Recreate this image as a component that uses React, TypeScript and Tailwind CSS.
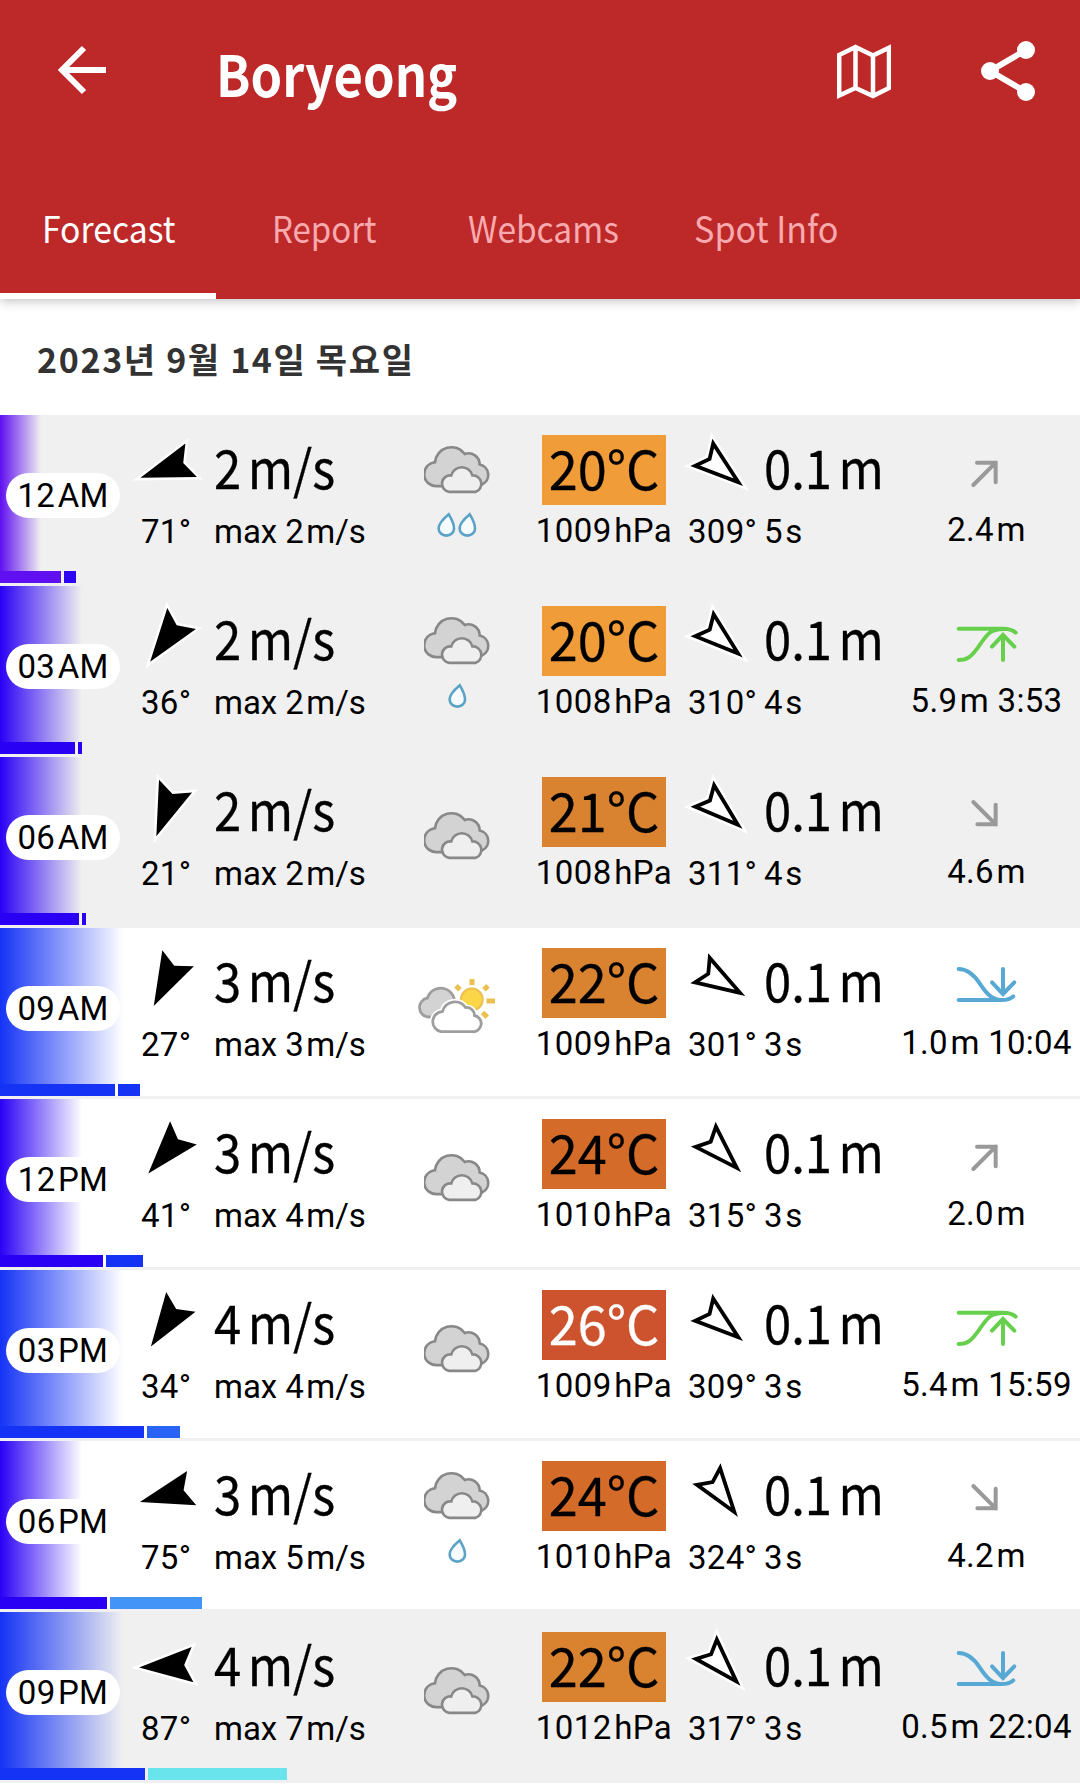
type Tide = "rising" | "falling" | "high" | "low"

interface ForecastRow {
  time: string
  half: "AM" | "PM"
  night: boolean
  windDeg: number
  wind: number
  gust: number
  sky: "cloudy" | "partly"
  drops: number
  temp: number
  tempClass: string
  pressure: number
  waveDeg: number
  period: number
  tide: Tide
  level: string
  tideTime?: string
  gradientClass: string
  barClass: string
  gustBarClass: string
}

const rows: ForecastRow[] = [
  { time: "12", half: "AM", night: true, windDeg: 71, wind: 2, gust: 2, sky: "cloudy", drops: 2, temp: 20, tempClass: "bg-[#f09c38]", pressure: 1009, waveDeg: 309, period: 5, tide: "rising", level: "2.4", gradientClass: "w-[41px] from-[#5f0ff0]", barClass: "w-[61px] bg-[#5f0ff0]", gustBarClass: "w-[12px] bg-[#2d05f2]" },
  { time: "03", half: "AM", night: true, windDeg: 36, wind: 2, gust: 2, sky: "cloudy", drops: 1, temp: 20, tempClass: "bg-[#f09c38]", pressure: 1008, waveDeg: 310, period: 4, tide: "high", level: "5.9", tideTime: "3:53", gradientClass: "w-[82px] from-[#2a00f5]", barClass: "w-[75px] bg-[#2a00f5]", gustBarClass: "w-[4px] bg-[#2a00f5]" },
  { time: "06", half: "AM", night: true, windDeg: 21, wind: 2, gust: 2, sky: "cloudy", drops: 0, temp: 21, tempClass: "bg-[#d9822f]", pressure: 1008, waveDeg: 311, period: 4, tide: "falling", level: "4.6", gradientClass: "w-[82px] from-[#2a00f5]", barClass: "w-[79px] bg-[#2a00f5]", gustBarClass: "w-[4px] bg-[#2a00f5]" },
  { time: "09", half: "AM", night: false, windDeg: 27, wind: 3, gust: 3, sky: "partly", drops: 0, temp: 22, tempClass: "bg-[#d9822f]", pressure: 1009, waveDeg: 301, period: 3, tide: "low", level: "1.0", tideTime: "10:04", gradientClass: "w-[123px] from-[#1433f5]", barClass: "w-[115px] bg-[#1433f5]", gustBarClass: "w-[22px] bg-[#1433f5]" },
  { time: "12", half: "PM", night: false, windDeg: 41, wind: 3, gust: 4, sky: "cloudy", drops: 0, temp: 24, tempClass: "bg-[#d46b29]", pressure: 1010, waveDeg: 315, period: 3, tide: "rising", level: "2.0", gradientClass: "w-[82px] from-[#2a00f5]", barClass: "w-[103px] bg-[#2a00f5]", gustBarClass: "w-[37px] bg-[#1433f5]" },
  { time: "03", half: "PM", night: false, windDeg: 34, wind: 4, gust: 4, sky: "cloudy", drops: 0, temp: 26, tempClass: "bg-[#cc532d] text-white", pressure: 1009, waveDeg: 309, period: 3, tide: "high", level: "5.4", tideTime: "15:59", gradientClass: "w-[123px] from-[#1433f5]", barClass: "w-[144px] bg-[#1433f5]", gustBarClass: "w-[33px] bg-[#2863f5]" },
  { time: "06", half: "PM", night: false, windDeg: 75, wind: 3, gust: 5, sky: "cloudy", drops: 1, temp: 24, tempClass: "bg-[#d46b29]", pressure: 1010, waveDeg: 324, period: 3, tide: "falling", level: "4.2", gradientClass: "w-[82px] from-[#2a00f5]", barClass: "w-[107px] bg-[#2a00f5]", gustBarClass: "w-[92px] bg-[#4294f7]" },
  { time: "09", half: "PM", night: true, windDeg: 87, wind: 4, gust: 7, sky: "cloudy", drops: 0, temp: 22, tempClass: "bg-[#d9822f]", pressure: 1012, waveDeg: 317, period: 3, tide: "low", level: "0.5", tideTime: "22:04", gradientClass: "w-[123px] from-[#1433f5]", barClass: "w-[145px] bg-[#1433f5]", gustBarClass: "w-[139px] bg-[#69e3ec]" },
]

const ARROW = "M0 -27 L17.7 26.6 L0 18.2 L-17.7 26.6 Z"
const ARROW_INNER = "M0 -21 L14.3 22.9 L0 16 L-14.3 22.9 Z"

// Arrows point where the wind or swell is heading, so the bearing is turned by 180
function DirectionArrow({ deg, outline = false }: { deg: number; outline?: boolean }) {
  return (
    <svg viewBox="-32 -32 64 64" className="w-16 h-16 overflow-visible">
      <g transform={`rotate(${deg + 180})`}>
        <path d={ARROW} fill="#fff" stroke="#fff" strokeWidth="5" />
        {outline ? <path d={ARROW_INNER} fill="#fff" stroke="#000" strokeWidth="3.8" /> : <path d={ARROW} />}
      </g>
    </svg>
  )
}

function CloudIcon() {
  return (
    <svg viewBox="130 106 202 148" className="w-[67px] h-[49px]" stroke="#888" strokeWidth="8">
      <path d="M190 230H170A36 36 0 0 1 163 158A50 50 0 0 1 253 133A34 34 0 0 1 298 165A32 32 0 0 1 306 225Z" fill="#d3d3d3" />
      <path d="M206 247.500A24.500 24.500 0 0 1 212 198A33 33 0 0 1 276 198A25.500 25.500 0 0 1 286 247.500Z" fill="#efefef" />
    </svg>
  )
}

function SunCloudIcon() {
  return (
    <svg viewBox="418 978 79 57" className="w-[79px] h-[57px] overflow-visible">
      <circle cx="471.800" cy="999.500" r="10.900" fill="#fad648" stroke="#ecc04f" strokeWidth="2" />
      <path d="M472 979v6M486.500 1001h8.500M484 989.700l4-4M460 989.700l-4-4M482.500 1012.500l4.800 4.600" stroke="#ecc04f" strokeWidth="5" />
      <path d="M436 1017H428A9.600 9.600 0 0 1 427.500 998A13.500 13.500 0 1 1 454 1006Z" fill="#d3d3d3" stroke="#9e9e9e" strokeWidth="2.800" />
      <path d="M441 1031.700A10.200 10.200 0 0 1 442.500 1011.500A12.800 12.800 0 0 1 465.500 1007.500A8 8 0 0 1 474.500 1015.500A8.200 8.200 0 0 1 472 1031.700Z" fill="#fff" stroke="#fff" strokeWidth="6" />
      <path d="M441 1031.700A10.200 10.200 0 0 1 442.500 1011.500A12.800 12.800 0 0 1 465.500 1007.500A8 8 0 0 1 474.500 1015.500A8.200 8.200 0 0 1 472 1031.700Z" fill="#fff" stroke="#9e9e9e" strokeWidth="2.800" />
    </svg>
  )
}

function DropIcon() {
  return (
    <svg viewBox="172 306 58 76" className="w-[19px] h-[25px]">
      <path d="M208 313C190 328 177 343 177 356A23.500 22 0 0 0 224 356C224 342 217 328 208 313Z" fill="#f6fbfd" stroke="#5ba3c6" strokeWidth="8" />
    </svg>
  )
}

const tidePaths: Record<Tide, { d: string; color: string }> = {
  rising: { d: "M59 96L126 29M70 29H126V88", color: "#999999" },
  falling: { d: "M59 21L126 88M126 29V88H71", color: "#999999" },
  high: { d: "M15 14H148C168 14 178 18 186 26M15 108C40 108 53 100 78 63S113 16 148 15M148 108V33M115 68L148 33L182 68", color: "#66d04c" },
  low: { d: "M15 9C40 9 58 22 78 52S113 100 143 102M15 102H143C163 102 173 97 179 91M148 9V84M115 49L148 84L182 49", color: "#57a9d3" },
}

function TideIcon({ tide }: { tide: Tide }) {
  const { d, color } = tidePaths[tide]
  return (
    <svg viewBox="4 0 192 120" className="w-16 h-10 overflow-visible" fill="none" stroke={color} strokeWidth="12" strokeLinecap="round">
      <path d={d} />
    </svg>
  )
}

const bigFont = "font-['Noto_Sans_CJK_KR',sans-serif] text-[53px] [-webkit-text-stroke:0.3px]"
const bigText = `${bigFont} leading-[70px] whitespace-pre`
const smallText = "text-[33px] leading-10 tracking-[0.3px] whitespace-pre"

function BigValue({ value, unit }: { value: string | number; unit: string }) {
  return (
    <span className="inline-block origin-left scale-x-[0.925]">
      {value}
      <span className="ml-[7px]">{unit}</span>
    </span>
  )
}

function Value({ value, unit }: { value: string | number; unit: string }) {
  return (
    <>
      {value}
      <span className="ml-[2.5px]">{unit}</span>
    </>
  )
}

function Row({ row }: { row: ForecastRow }) {
  return (
    <div className={`relative h-[171px] border-b-3 border-[#f0f0f0] ${row.night ? "bg-[#f0f0f0]" : "bg-white"}`}>
      <div className={`absolute left-0 top-0 h-[156px] bg-linear-to-r/srgb to-transparent ${row.gradientClass}`} />
      <div className="relative flex h-[156px]">
        <div className="w-[134px] pl-1.5 pt-[58px]">
          <div className={`w-[114px] h-[45px] rounded-full bg-white text-center ${smallText}`}>
            <span className="block pt-[3px]">
              <Value value={row.time} unit={row.half} />
            </span>
          </div>
        </div>

        <div className="w-[258px] pt-4 grid grid-cols-[80px_1fr] grid-rows-[81px_40px]">
          <div className="pt-1.5">
            <DirectionArrow deg={row.windDeg} />
          </div>
          <div className={bigText}>
            <BigValue value={row.wind} unit="m/s" />
          </div>
          <div className={`pl-[7px] ${smallText}`}>{row.windDeg}°</div>
          <div className="text-[33px] leading-10 tracking-[-0.05px] whitespace-pre">
            max <Value value={row.gust} unit="m/s" />
          </div>
        </div>

        <div className={`w-[130px] flex flex-col items-center justify-center ${row.drops > 0 ? "pb-1 gap-[18px]" : ""}`}>
          {row.sky === "partly" ? <SunCloudIcon /> : <CloudIcon />}
          {row.drops > 0 && (
            <div className="flex gap-0.5">
              {Array.from({ length: row.drops }, (_, i) => (
                <DropIcon key={i} />
              ))}
            </div>
          )}
        </div>

        <div className="w-[164px] pt-5 flex flex-col items-center">
          <div className={`w-[124px] h-[70px] flex justify-center ${row.tempClass}`}>
            <span className={`${bigFont} leading-[65px] scale-x-[0.985]`}>{row.temp}°C</span>
          </div>
          <div className="pt-1.5 text-[33px] leading-10 tracking-[0.4px] whitespace-pre">
            <Value value={row.pressure} unit="hPa" />
          </div>
        </div>

        <div className="w-[208px] pt-4 grid grid-cols-[78px_1fr] grid-rows-[81px_40px]">
          <div className="pl-1 pt-1.5">
            <DirectionArrow deg={row.waveDeg} outline />
          </div>
          <div className={bigText}>
            <BigValue value="0.1" unit="m" />
          </div>
          <div className={`pl-0.5 ${smallText}`}>{row.waveDeg}°</div>
          <div className={smallText}>
            <Value value={row.period} unit="s" />
          </div>
        </div>

        <div className="w-[185px] pt-[38px] flex flex-col items-center">
          <TideIcon tide={row.tide} />
          <div className={`pt-[17px] ${smallText}`}>
            <Value value={row.level} unit="m" />
            {row.tideTime && ` ${row.tideTime}`}
          </div>
        </div>
      </div>
      <div className="relative flex gap-[3px] h-3">
        <div className={row.barClass} />
        <div className={row.gustBarClass} />
      </div>
    </div>
  )
}

const tabText = "origin-left text-[36.500px] leading-[56px] whitespace-nowrap"

function Header() {
  return (
    <header className="relative z-10 h-[299px] flex flex-col bg-[#bd2829] text-white shadow-[0_2px_10px_rgba(0,0,0,0.25)] font-['Noto_Sans_CJK_KR',sans-serif]">
      <div className="flex h-[200px]">
        <div className="w-[216px] pl-[57px] pt-[45px]">
          <svg viewBox="0 0 50 50" className="w-[50px] h-[50px]" fill="none" stroke="#fff" strokeWidth="6">
            <path d="M49 25H5M27 3L5 25L27 47" />
          </svg>
        </div>
        <h1 className="w-[618px] pt-[32px] text-[57px] leading-[80px] font-bold">
          <span className="inline-block origin-left scale-x-[0.888]">Boryeong</span>
        </h1>
        <div className="w-[144px] pl-[3px] pt-[44px]">
          <svg viewBox="0 0 54 56" className="w-[54px] h-[56px]" fill="none" stroke="#fff" strokeWidth="4.500">
            <path d="M2.200 11L18.500 3L36 11.500L52 3.700V44L36 52L18.500 44L2.200 51.500ZM18.500 3V44M36 11.500V52" />
          </svg>
        </div>
        <div className="pt-[41px]">
          <svg viewBox="0 0 60 60" className="w-[60px] h-[60px]" fill="#fff">
            <path d="M48 9L12 30L48 51" fill="none" stroke="#fff" strokeWidth="6" />
            <circle cx="48" cy="9" r="9" />
            <circle cx="12" cy="30" r="9" />
            <circle cx="48" cy="51" r="9" />
          </svg>
        </div>
      </div>
      <nav className="flex h-[99px] text-[#f9aaae]">
        <div className="w-[216px] border-b-6 border-white text-white pl-[42px]">
          <div className={`${tabText} scale-x-[0.924]`}>Forecast</div>
        </div>
        <div className="w-[216px] pl-[56px]">
          <div className={`${tabText} scale-x-[0.904]`}>Report</div>
        </div>
        <div className="w-[216px] pl-[36px]">
          <div className={`${tabText} scale-x-[0.917]`}>Webcams</div>
        </div>
        <div className="w-[216px] pl-[46px]">
          <div className={`${tabText} scale-x-[0.937]`}>Spot Info</div>
        </div>
      </nav>
    </header>
  )
}

export default function App() {
  return (
    <div className="w-[1080px] h-[1788px] overflow-hidden bg-white text-black font-[Roboto,sans-serif]">
      <Header />
      <h2 className="h-[116px] pl-[37px] pt-[30px] font-['Noto_Sans_CJK_KR',sans-serif] font-bold text-[34px] leading-[60px] tracking-[1.65px] text-[#333]">
        2023년 9월 14일 목요일
      </h2>
      {rows.map((row) => (
        <Row key={row.time + row.half} row={row} />
      ))}
    </div>
  )
}
